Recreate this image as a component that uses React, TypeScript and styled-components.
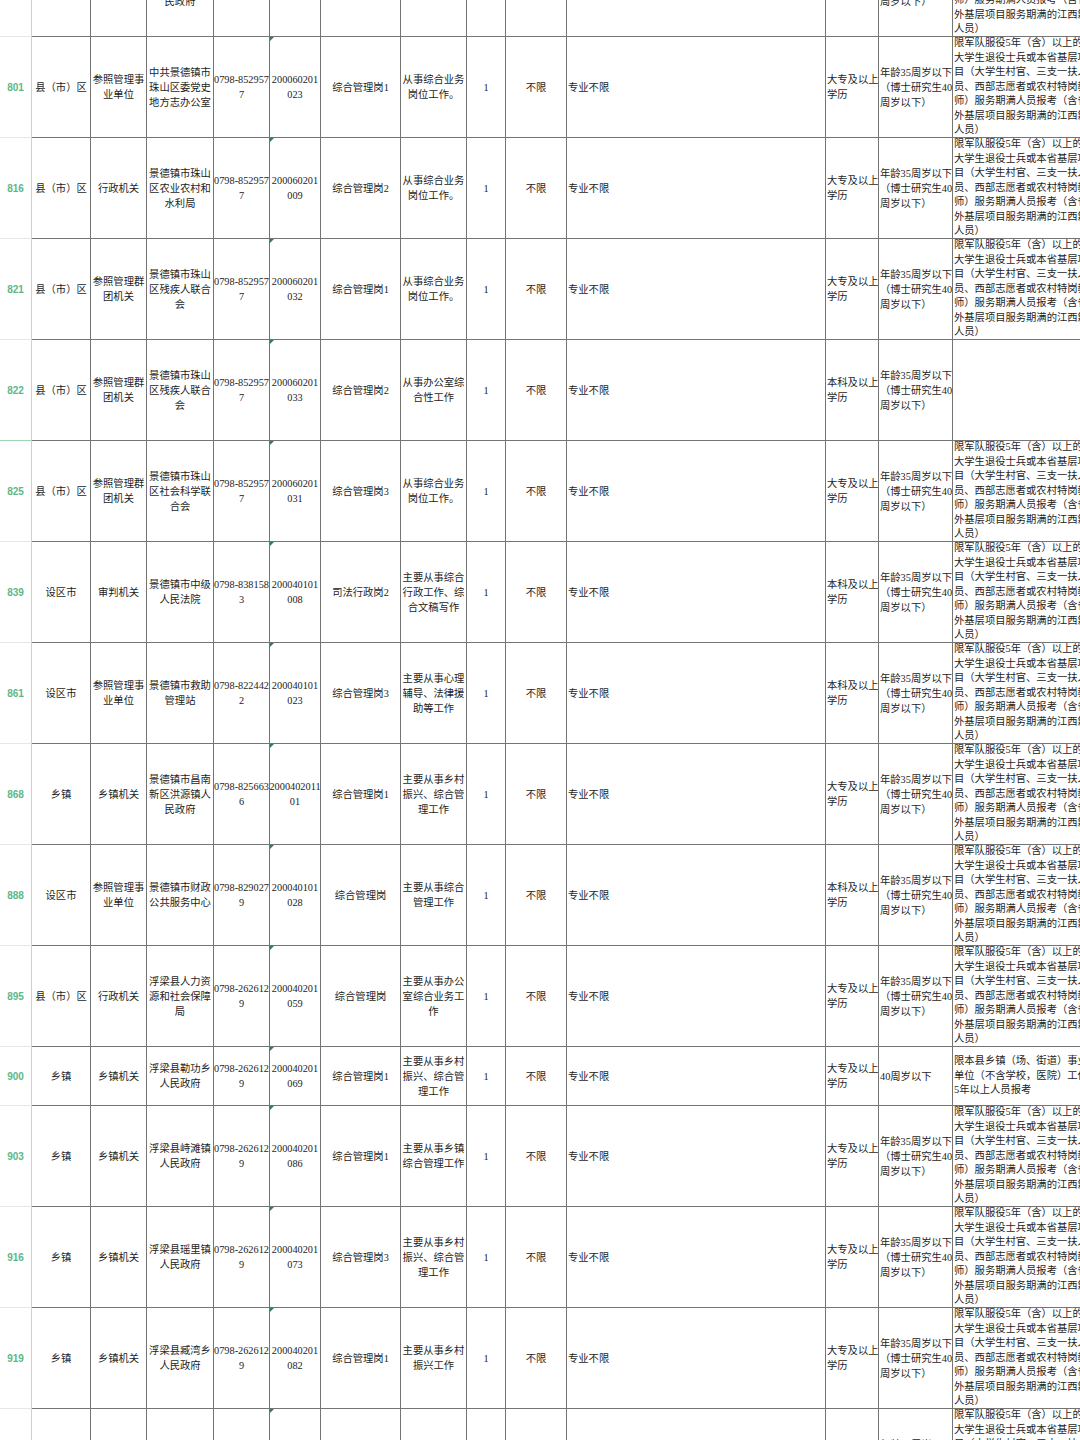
import styled, { createGlobalStyle } from "styled-components"

const GlobalStyle = createGlobalStyle`
    html, body {
        margin: 0;
        padding: 0;
        background: #ffffff;
        overflow: hidden;
    }
`

// column widths of the sheet, left to right
const COLS = "32px 59px 56px 67px 56px 51px 80px 66px 39px 61px 259px 53px 74px 160px"

const Sheet = styled.div`
    width: 1080px;
    height: 1440px;
    overflow: hidden;
    background: #ffffff;
    font-family: "Liberation Serif", "Noto Sans CJK SC", serif;
    font-size: 10.3px;
    color: #1d1d1d;
`

const Body = styled.div`
    margin-top: -64px;
`

const Row = styled.div<{ $h: number }>`
    display: grid;
    grid-template-columns: ${COLS};
    height: ${props => props.$h}px;
`

const RowNum = styled.div<{ $mark?: boolean }>`
    display: flex;
    align-items: center;
    justify-content: center;
    font-family: "Liberation Sans", Arial, sans-serif;
    font-weight: 700;
    font-size: 10px;
    color: #5cb88a;
    border-right: 1px solid #cfcfcf;
    border-bottom: 1px solid ${props => (props.$mark ? "#9dd5b8" : "#e6e6e6")};
`

type CellProps = {
    $align?: "left" | "center";
    $flag?: boolean;
    $lh?: number;
}

const Cell = styled.div<CellProps>`
    position: relative;
    display: flex;
    align-items: center;
    justify-content: ${props => (props.$align === "left" ? "flex-start" : "center")};
    text-align: ${props => (props.$align === "left" ? "left" : "center")};
    padding-left: ${props => (props.$align === "left" ? "1px" : "0")};
    white-space: pre;
    line-height: ${props => props.$lh ?? 15}px;
    border-right: 1px solid #747474;
    border-bottom: 1px solid #747474;
    overflow: hidden;

    &::before {
        content: "";
        display: ${props => (props.$flag ? "block" : "none")};
        position: absolute;
        top: 0;
        left: 0;
        border-top: 4px solid #2e8055;
        border-right: 4px solid transparent;
    }
`

const ALIGN: ("left" | "center")[] = [
    "center", "center", "center", "center", "center", "center",
    "center", "center", "center", "left", "left", "left", "left",
]

const AGE = "年龄35周岁以下\n（博士研究生40\n周岁以下）"
const DAZHUAN = "大专及以上\n学历"
const BENKE = "本科及以上\n学历"
const ARMY =
    "限军队服役5年（含）以上的\n大学生退役士兵或本省基层项\n目（大学生村官、三支一扶人\n员、西部志愿者或农村特岗教\n师）服务期满人员报考（含省\n外基层项目服务期满的江西籍\n人员）"
const JOB = "从事综合业务\n岗位工作。"
const RURAL = "主要从事乡村\n振兴、综合管\n理工作"

type RowData = {
    no: string;
    h?: number;
    mark?: boolean;
    cells: string[];
}

const rows: RowData[] = [
    { no: "799", cells: ["乡镇", "乡镇机关", "景德镇市昌南\n新区丽阳镇人\n民政府", "0798-825663\n6", "200040201\n012", "综合管理岗1", "主要从事乡村\n振兴工作", "1", "不限", "专业不限", DAZHUAN, AGE, ARMY] },
    { no: "801", cells: ["县（市）区", "参照管理事\n业单位", "中共景德镇市\n珠山区委党史\n地方志办公室", "0798-852957\n7", "200060201\n023", "综合管理岗1", JOB, "1", "不限", "专业不限", DAZHUAN, AGE, ARMY] },
    { no: "816", cells: ["县（市）区", "行政机关", "景德镇市珠山\n区农业农村和\n水利局", "0798-852957\n7", "200060201\n009", "综合管理岗2", JOB, "1", "不限", "专业不限", DAZHUAN, AGE, ARMY] },
    { no: "821", cells: ["县（市）区", "参照管理群\n团机关", "景德镇市珠山\n区残疾人联合\n会", "0798-852957\n7", "200060201\n032", "综合管理岗1", JOB, "1", "不限", "专业不限", DAZHUAN, AGE, ARMY] },
    { no: "822", mark: true, cells: ["县（市）区", "参照管理群\n团机关", "景德镇市珠山\n区残疾人联合\n会", "0798-852957\n7", "200060201\n033", "综合管理岗2", "从事办公室综\n合性工作", "1", "不限", "专业不限", BENKE, AGE, ""] },
    { no: "825", cells: ["县（市）区", "参照管理群\n团机关", "景德镇市珠山\n区社会科学联\n合会", "0798-852957\n7", "200060201\n031", "综合管理岗3", JOB, "1", "不限", "专业不限", DAZHUAN, AGE, ARMY] },
    { no: "839", cells: ["设区市", "审判机关", "景德镇市中级\n人民法院", "0798-838158\n3", "200040101\n008", "司法行政岗2", "主要从事综合\n行政工作、综\n合文稿写作", "1", "不限", "专业不限", BENKE, AGE, ARMY] },
    { no: "861", cells: ["设区市", "参照管理事\n业单位", "景德镇市救助\n管理站", "0798-822442\n2", "200040101\n023", "综合管理岗3", "主要从事心理\n辅导、法律援\n助等工作", "1", "不限", "专业不限", BENKE, AGE, ARMY] },
    { no: "868", cells: ["乡镇", "乡镇机关", "景德镇市昌南\n新区洪源镇人\n民政府", "0798-825663\n6", "2000402011\n01", "综合管理岗1", RURAL, "1", "不限", "专业不限", DAZHUAN, AGE, ARMY] },
    { no: "888", cells: ["设区市", "参照管理事\n业单位", "景德镇市财政\n公共服务中心", "0798-829027\n9", "200040101\n028", "综合管理岗", "主要从事综合\n管理工作", "1", "不限", "专业不限", BENKE, AGE, ARMY] },
    { no: "895", cells: ["县（市）区", "行政机关", "浮梁县人力资\n源和社会保障\n局", "0798-262612\n9", "200040201\n059", "综合管理岗", "主要从事办公\n室综合业务工\n作", "1", "不限", "专业不限", DAZHUAN, AGE, ARMY] },
    { no: "900", h: 59, cells: ["乡镇", "乡镇机关", "浮梁县勒功乡\n人民政府", "0798-262612\n9", "200040201\n069", "综合管理岗1", RURAL, "1", "不限", "专业不限", DAZHUAN, "40周岁以下", "限本县乡镇（场、街道）事业\n单位（不含学校，医院）工作\n5年以上人员报考"] },
    { no: "903", cells: ["乡镇", "乡镇机关", "浮梁县峙滩镇\n人民政府", "0798-262612\n9", "200040201\n086", "综合管理岗1", "主要从事乡镇\n综合管理工作", "1", "不限", "专业不限", DAZHUAN, AGE, ARMY] },
    { no: "916", cells: ["乡镇", "乡镇机关", "浮梁县瑶里镇\n人民政府", "0798-262612\n9", "200040201\n073", "综合管理岗3", RURAL, "1", "不限", "专业不限", DAZHUAN, AGE, ARMY] },
    { no: "919", cells: ["乡镇", "乡镇机关", "浮梁县臧湾乡\n人民政府", "0798-262612\n9", "200040201\n082", "综合管理岗1", "主要从事乡村\n振兴工作", "1", "不限", "专业不限", DAZHUAN, AGE, ARMY] },
    { no: "921", cells: ["乡镇", "乡镇机关", "浮梁县江村乡\n人民政府", "0798-262612\n9", "200040201\n090", "综合管理岗1", "主要从事乡村\n振兴工作", "1", "不限", "专业不限", DAZHUAN, AGE, ARMY] },
]

export default function App() {
    return (
        <Sheet>
            <GlobalStyle />
            <Body>
                {rows.map(row => (
                    <Row key={row.no} $h={row.h ?? 101}>
                        <RowNum $mark={row.mark}>{row.no}</RowNum>
                        {row.cells.map((text, i) => (
                            <Cell
                                key={i}
                                $align={ALIGN[i]}
                                $flag={i === 4}
                                $lh={i === 12 ? 14.6 : 15}
                            >
                                {text}
                            </Cell>
                        ))}
                    </Row>
                ))}
            </Body>
        </Sheet>
    )
}
